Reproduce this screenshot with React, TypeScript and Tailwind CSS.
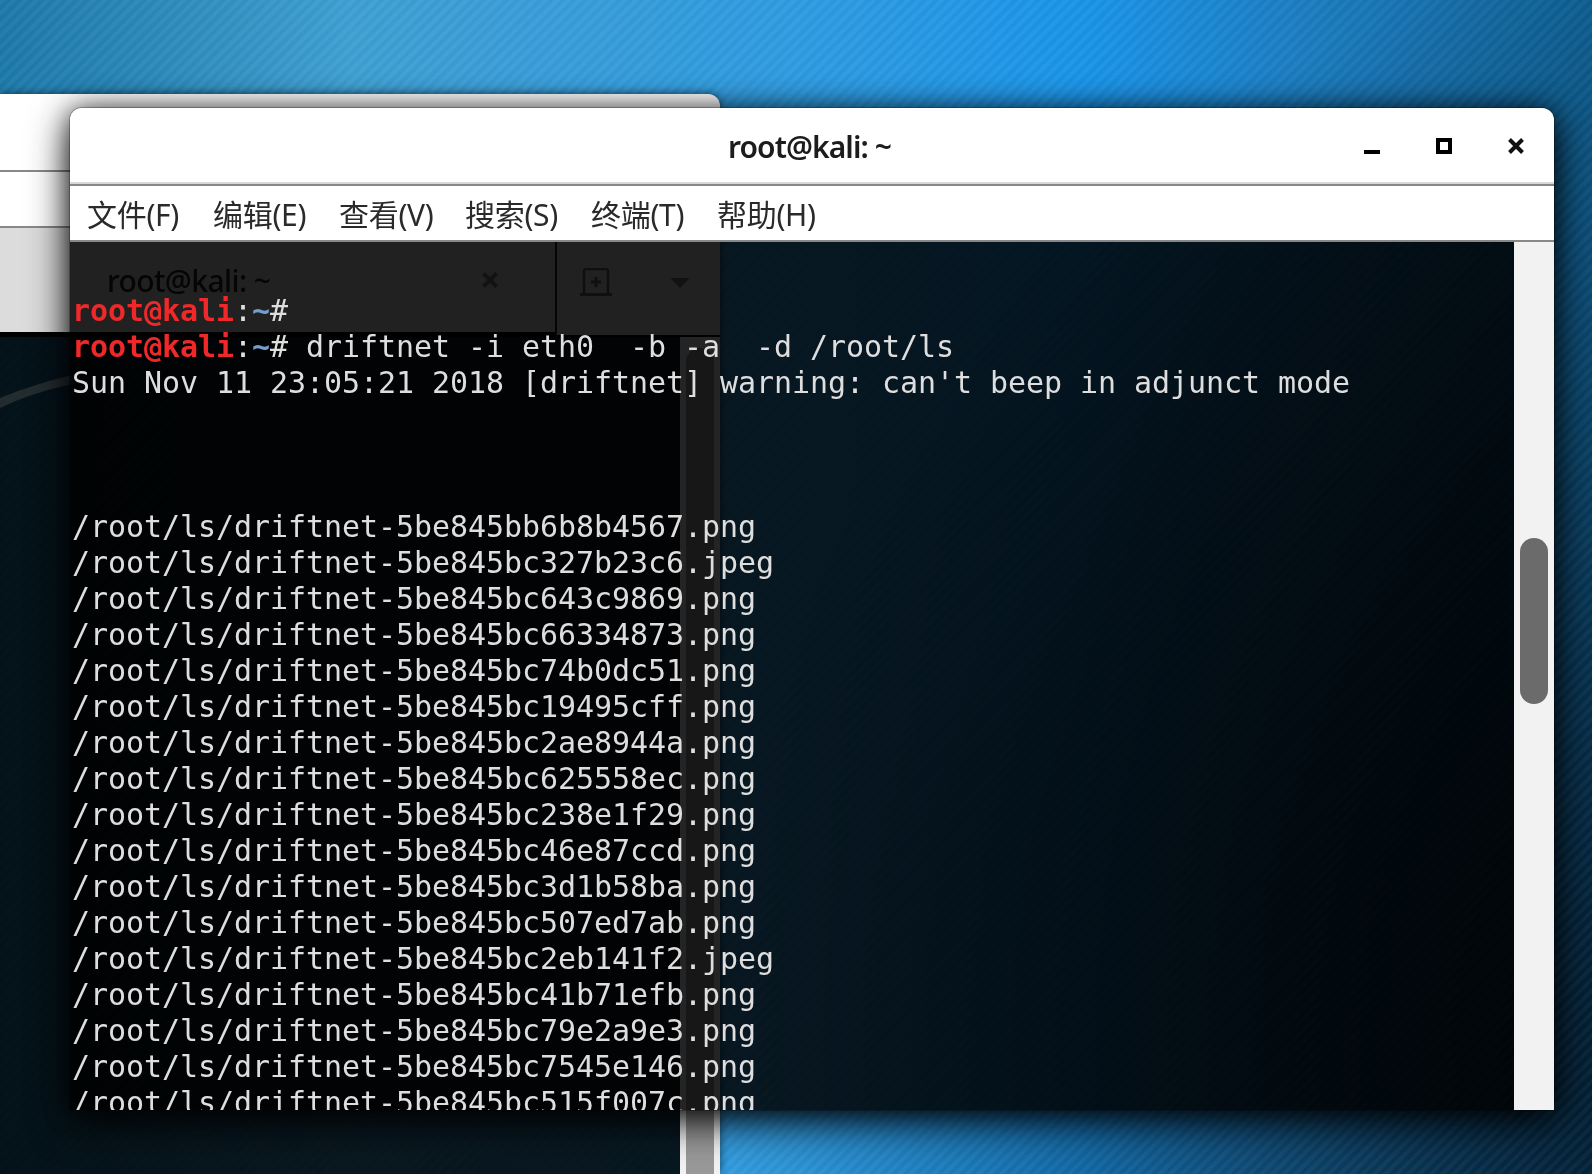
const files = [
  "5be845bb6b8b4567.png",
  "5be845bc327b23c6.jpeg",
  "5be845bc643c9869.png",
  "5be845bc66334873.png",
  "5be845bc74b0dc51.png",
  "5be845bc19495cff.png",
  "5be845bc2ae8944a.png",
  "5be845bc625558ec.png",
  "5be845bc238e1f29.png",
  "5be845bc46e87ccd.png",
  "5be845bc3d1b58ba.png",
  "5be845bc507ed7ab.png",
  "5be845bc2eb141f2.jpeg",
  "5be845bc41b71efb.png",
  "5be845bc79e2a9e3.png",
  "5be845bc7545e146.png",
  "5be845bc515f007c.png",
];

const menus = ["文件(F)", "编辑(E)", "查看(V)", "搜索(S)", "终端(T)", "帮助(H)"];

function Prompt() {
  return (
    <>
      <span className="font-bold text-[#ef2929]">root@kali</span>
      <span>:</span>
      <span className="font-bold text-[#729fcf]">~</span>
      <span>#</span>
    </>
  );
}

// the window behind, only its tab bar and scrollbar still show
function BackWindow() {
  return (
    <div className="absolute left-0 top-[94px] flex h-[1080px] w-[720px] flex-col overflow-hidden rounded-tr-xl shadow-[0_0_8px_rgba(0,0,0,0.6)]">
      <div className="h-[78px] shrink-0 border-b-2 border-[#888888] bg-white" />
      <div className="h-[56px] shrink-0 border-b-2 border-[#888888] bg-white" />
      <div className="flex h-[109px] shrink-0 items-start bg-black">
        <div className="flex h-[104px] w-[555px] items-center justify-between bg-[#dcdcdc] pl-[107px] pr-[57px]">
          <span className="font-['Noto_Sans',sans-serif] text-[30px] font-medium tracking-[-0.6px] text-[#222222]">
            root@kali: ~
          </span>
          <svg width="16" height="16" viewBox="0 0 16 16">
            <path d="M1.5 1.5L14.5 14.5M14.5 1.5L1.5 14.5" stroke="#777777" strokeWidth="4" />
          </svg>
        </div>
        <div className="h-full w-[2px] bg-[#222222]" />
        <div className="flex h-full flex-1 items-start border-b-2 border-black bg-[#dcdcdc] pl-[23px] pt-[40px]">
          <svg width="32" height="28" viewBox="0 0 32 28" fill="none">
            <path d="M4 25V3a2 2 0 0 1 2-2h20a2 2 0 0 1 2 2v22" stroke="#666666" strokeWidth="2.5" />
            <path d="M0 26.5H32" stroke="#666666" strokeWidth="3" />
            <path d="M16 9V19M11 14H21" stroke="#666666" strokeWidth="3" />
          </svg>
          <svg className="ml-[58px] mt-[10px]" width="20" height="10" viewBox="0 0 20 10">
            <path d="M0 0H20L10 10Z" fill="#777777" />
          </svg>
        </div>
      </div>
      <div className="relative flex flex-1 justify-end bg-black/85">
        <svg className="absolute left-0 top-[30px]" width="80" height="50" viewBox="0 0 80 50">
          <path d="M0 31C25 21 50 13 80 6V16C50 21 25 29 0 41Z" fill="rgba(190,180,160,0.16)" />
        </svg>
        <div className="flex w-[40px] justify-center bg-[#f2f2f2] pt-[11px]">
          <div className="w-[28px] rounded-t-[14px] bg-[#999999]" />
        </div>
      </div>
    </div>
  );
}

function TerminalWindow() {
  return (
    <div className="absolute left-[70px] top-[108px] flex h-[1002px] w-[1484px] flex-col rounded-t-xl shadow-[0_12px_40px_rgba(0,0,0,0.9),0_0_24px_rgba(0,0,0,0.5),0_0_0_1px_rgba(0,0,0,0.25)]">
      <div className="grid h-[78px] shrink-0 grid-cols-[1fr_auto_1fr] items-center rounded-t-xl border-b-2 border-[#888888] bg-white shadow-[inset_0_-2px_0_#d8d8d8]">
        <div />
        <div className="pr-[5px] font-['Noto_Sans',sans-serif] text-[30px] font-semibold tracking-[-0.9px] text-[#1c1c1c]">
          root@kali: ~
        </div>
        <div className="flex items-end justify-end gap-[56px] pr-[30px]">
          <div className="h-[4px] w-[16px] bg-black" />
          <div className="h-[16px] w-[16px] border-4 border-black" />
          <svg width="16" height="16" viewBox="0 0 16 16">
            <path d="M1.5 1.5L14.5 14.5M14.5 1.5L1.5 14.5" stroke="#111111" strokeWidth="4" />
          </svg>
        </div>
      </div>
      <div className="flex h-[56px] shrink-0 items-center border-b-2 border-[#888888] bg-white pl-[17px] pt-[2px] font-['Noto_Sans','Noto_Sans_CJK_SC',sans-serif] text-[30px] tracking-[-0.3px] text-[#2a2a2a]">
        {menus.map((m) => (
          <span key={m} className="w-[126px] shrink-0">
            {m}
          </span>
        ))}
      </div>
      <div className="flex min-h-0 flex-1">
        <div className="min-w-0 flex-1 overflow-hidden bg-black/85 pl-[2px] pt-[51px] font-['DejaVu_Sans_Mono',monospace] text-[30px] leading-[36px] tracking-[-0.06px] text-[#dedede]">
          <div className="whitespace-pre">
            <Prompt />
          </div>
          <div className="whitespace-pre">
            <Prompt /> driftnet -i eth0  -b -a  -d /root/ls
          </div>
          <div className="whitespace-pre">Sun Nov 11 23:05:21 2018 [driftnet] warning: can't beep in adjunct mode</div>
          <div className="h-[108px]" />
          {files.map((f) => (
            <div key={f} className="whitespace-pre">
              /root/ls/driftnet-{f}
            </div>
          ))}
        </div>
        <div className="flex w-[40px] shrink-0 justify-center bg-[#f2f2f2] pt-[296px]">
          <div className="h-[166px] w-[28px] rounded-full bg-[#6b6b6b]" />
        </div>
      </div>
    </div>
  );
}

export default function App() {
  return (
    <div className="relative h-[1174px] w-[1592px] overflow-hidden bg-[repeating-linear-gradient(135deg,rgba(255,255,255,0.035)_0px,rgba(255,255,255,0.035)_4px,rgba(0,0,0,0.02)_4px,rgba(0,0,0,0.02)_8px),radial-gradient(ellipse_1000px_1100px_at_1720px_1050px,rgba(2,20,35,0.97),rgba(2,20,35,0)),linear-gradient(90deg,#1d78a8_0%,#3f9fd2_22%,#2f9be0_50%,#1a94e8_68%,#1b7cc0_82%,#0e5f92_100%)] blur-[0.5px]">
      <BackWindow />
      <TerminalWindow />
    </div>
  );
}
